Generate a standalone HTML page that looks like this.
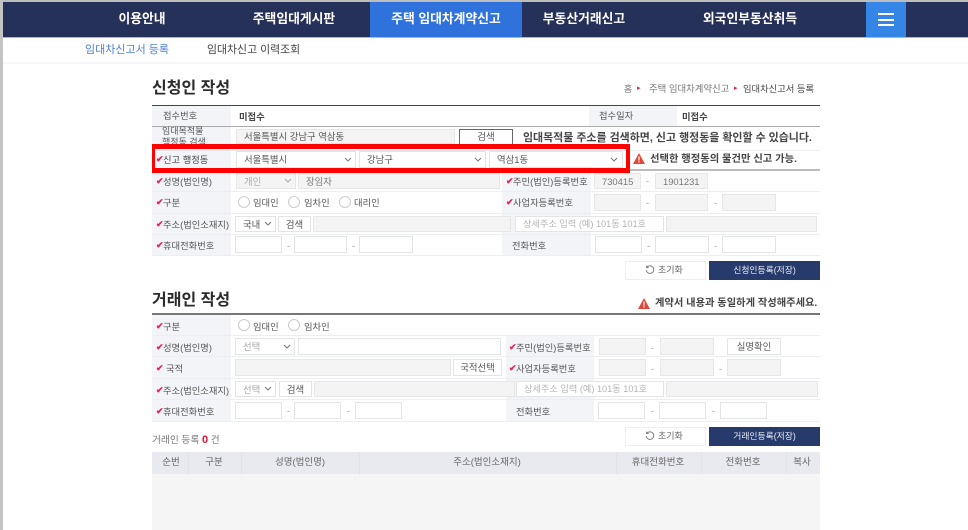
<!DOCTYPE html>
<html lang="ko"><head><meta charset="utf-8"><title>임대차신고서 등록</title>
<style>
html,body{margin:0;padding:0;width:968px;height:530px;overflow:hidden;background:#fff}
body{position:relative;font-family:"Liberation Sans","Noto Sans CJK KR",sans-serif;font-size:10px;color:#555;filter:blur(.3px)}
div,span{position:absolute;white-space:nowrap;box-sizing:border-box}
.t{line-height:14px;height:14px}
.n{color:#fff;font-size:12.8px;font-weight:700;line-height:20px;top:9px;text-align:center}
.l{left:152px;width:79px;background:#f3f4f8}
.m{background:#f3f4f8}
.h{height:1px;background:#eceef1;left:152px;width:668px}
.i{background:#fff;border:1px solid #e3e4e6;height:17px;font-size:9.4px;line-height:15px;padding-left:7px}
.g{background:#f4f4f4;border:1px solid #e6e6e6;height:17px;font-size:9.4px;line-height:15px;color:#777;padding-left:7px}
.c{color:#ee1c55;font-size:9px;font-weight:700;line-height:14px;height:14px}
.lb{font-size:9.3px;line-height:14px;height:14px;color:#555}
.r{width:12px;height:12px;border:1px solid #ccc;border-radius:50%;background:#fff}
.d{font-size:9px;color:#999;line-height:14px;height:14px}
.ch{width:8px;height:6px}
.th{top:456px;font-size:9.5px;line-height:14px;color:#666;text-align:center}
.s{top:452px;height:22px;width:1px;background:#e1e3e9}
</style></head><body>

<!-- Frame -->
<div style="left:0;top:0;width:968px;height:2px;background:#bdbdbd"></div>
<div style="left:0;top:0;width:3px;height:530px;background:#c4c4c4"></div>

<!-- Nav -->
<div style="left:3px;top:2px;width:965px;height:35px;background:#263159"></div>
<div style="left:3px;top:37px;width:965px;height:1px;background:#b5b7bf"></div>
<div style="left:370px;top:2px;width:152px;height:35px;background:#2f72dc"></div>
<div style="left:866px;top:2px;width:40px;height:35px;background:#3585e6"></div>
<div style="left:878px;top:13px;width:16px;height:2px;background:#fff"></div>
<div style="left:878px;top:19px;width:16px;height:2px;background:#fff"></div>
<div style="left:878px;top:24px;width:16px;height:2px;background:#fff"></div>
<div class="n" style="left:102px;width:80px">이용안내</div>
<div class="n" style="left:234px;width:120px">주택임대게시판</div>
<div class="n" style="left:376px;width:140px">주택 임대차계약신고</div>
<div class="n" style="left:524px;width:120px">부동산거래신고</div>
<div class="n" style="left:688px;width:124px">외국인부동산취득</div>

<!-- Sub nav -->
<div class="t" style="left:85px;top:43px;font-size:11px;color:#4f7fd6">임대차신고서 등록</div>
<div class="t" style="left:207px;top:43px;font-size:10.9px;color:#444">임대차신고 이력조회</div>
<div style="left:3px;top:62px;width:965px;height:2px;background:#f7f7f7"></div>

<!-- Section 1 -->
<div style="left:152px;top:78px;font-size:16px;font-weight:700;color:#2b2b2b;line-height:22px">신청인 작성</div>
<div class="t" style="left:624px;top:82px;font-size:9px;color:#777">홈</div>
<div class="t" style="left:637px;top:82px;font-size:7px;color:#e8194f">▸</div>
<div class="t" style="left:649px;top:82px;font-size:9.4px;color:#777">주택 임대차계약신고</div>
<div class="t" style="left:734px;top:82px;font-size:7px;color:#e8194f">▸</div>
<div class="t" style="left:743px;top:82px;font-size:9.3px;color:#444">임대차신고서 등록</div>

<div style="left:152px;top:105px;width:668px;height:1px;background:#444"></div>
<div class="l" style="top:106px;height:149px"></div>
<div class="m" style="left:589px;top:106px;width:88px;height:20px"></div>
<div class="m" style="left:502px;top:172px;width:89px;height:83px"></div>
<div style="left:152px;top:126px;width:668px;height:1px;background:#aaa"></div>
<div class="h" style="top:150px"></div>
<div style="left:152px;top:169px;width:668px;height:2px;background:#bcbcbc"></div>
<div class="h" style="top:191px"></div>
<div class="h" style="top:213px"></div>
<div class="h" style="top:234px"></div>
<div class="h" style="top:255px"></div>

<div class="lb" style="left:163px;top:109px">접수번호</div>
<div class="lb" style="left:239px;top:110px;font-weight:700;color:#444">미접수</div>
<div class="lb" style="left:599px;top:109px">접수일자</div>
<div class="lb" style="left:682px;top:110px;font-weight:700;color:#444">미접수</div>

<div class="lb" style="left:162px;top:126px;font-size:9px;line-height:10px">임대목적물</div>
<div class="lb" style="left:162px;top:137px;font-size:9px;line-height:10px;height:7px;overflow:hidden">행정동 검색</div>
<div class="g" style="left:236px;top:129px;width:219px;height:15px;line-height:14px;color:#555">서울특별시 강남구 역삼동</div>
<div style="left:459px;top:129px;width:54px;height:16px;background:#fff;border:1px solid #666;border-bottom:0;font-size:9.5px;line-height:15px;text-align:center;color:#555">검색</div>
<div class="t" style="left:523px;top:131px;font-size:10.95px;font-weight:700;color:#444">임대목적물 주소를 검색하면, 신고 행정동을 확인할 수 있습니다.</div>

<!-- Red row -->
<div class="c" style="left:156px;top:152px">✔</div>
<div class="lb" style="left:163px;top:153px;color:#444">신고 행정동</div>
<div class="i" style="left:236px;top:151px;width:120px;height:17px;color:#555">서울특별시</div>
<div class="i" style="left:359px;top:151px;width:127px;height:17px;color:#555">강남구</div>
<div class="i" style="left:489px;top:151px;width:134px;height:17px;color:#555">역삼1동</div>
<svg class="ch" style="position:absolute;left:344px;top:157px" viewBox="0 0 8 6"><path d="M1 1l3 3 3-3" fill="none" stroke="#777"/></svg>
<svg class="ch" style="position:absolute;left:474px;top:157px" viewBox="0 0 8 6"><path d="M1 1l3 3 3-3" fill="none" stroke="#777"/></svg>
<svg class="ch" style="position:absolute;left:610px;top:157px" viewBox="0 0 8 6"><path d="M1 1l3 3 3-3" fill="none" stroke="#777"/></svg>
<div style="left:152px;top:144px;width:478px;height:29px;border:solid #f00;border-width:5px 4px 5px 3px"></div>
<svg style="position:absolute;left:633px;top:153px" width="12" height="11" viewBox="0 0 12 11"><path d="M6 0L12 11H0Z" fill="#e0483a"/><rect x="5.4" y="3.5" width="1.2" height="4" fill="#fff"/><rect x="5.4" y="8.2" width="1.2" height="1.3" fill="#fff"/></svg>
<div class="t" style="left:650px;top:153px;font-size:10.3px;font-weight:700;color:#444">선택한 행정동의 물건만 신고 가능.</div>

<!-- 성명 -->
<div class="c" style="left:156px;top:174px">✔</div>
<div class="lb" style="left:163px;top:175px">성명(법인명)</div>
<div class="g" style="left:236px;top:173px;width:60px;height:16px;color:#aaa">개인</div>
<svg class="ch" style="position:absolute;left:284px;top:178px" viewBox="0 0 8 6"><path d="M1 1l3 3 3-3" fill="none" stroke="#aaa"/></svg>
<div class="g" style="left:298px;top:173px;width:202px;height:16px">장임자</div>
<div class="c" style="left:506px;top:174px">✔</div>
<div class="lb" style="left:513px;top:175px">주민(법인)등록번호</div>
<div class="g" style="left:594px;top:173px;width:47px;height:16px">730415</div>
<div class="d" style="left:646px;top:174px">-</div>
<div class="g" style="left:655px;top:173px;width:53px;height:16px">1901231</div>

<!-- 구분 -->
<div class="c" style="left:156px;top:195px">✔</div>
<div class="lb" style="left:163px;top:196px">구분</div>
<div class="r" style="left:238px;top:196px"></div><div class="lb" style="left:253px;top:196px">임대인</div>
<div class="r" style="left:288px;top:196px"></div><div class="lb" style="left:304px;top:196px">임차인</div>
<div class="r" style="left:339px;top:196px"></div><div class="lb" style="left:354px;top:196px">대리인</div>
<div class="c" style="left:506px;top:195px">✔</div>
<div class="lb" style="left:513px;top:196px">사업자등록번호</div>
<div class="g" style="left:594px;top:194px;width:47px;height:17px"></div>
<div class="d" style="left:646px;top:196px">-</div>
<div class="g" style="left:655px;top:194px;width:53px;height:17px"></div>
<div class="d" style="left:714px;top:196px">-</div>
<div class="g" style="left:722px;top:194px;width:54px;height:17px"></div>

<!-- 주소 -->
<div class="c" style="left:156px;top:217px">✔</div>
<div class="lb" style="left:163px;top:218px">주소(법인소재지)</div>
<div class="i" style="left:235px;top:216px;width:41px;height:16px">국내</div>
<svg class="ch" style="position:absolute;left:264px;top:221px" viewBox="0 0 8 6"><path d="M1 1l3 3 3-3" fill="none" stroke="#777"/></svg>
<div class="i" style="left:278px;top:216px;width:33px;height:16px;padding:0;text-align:center">검색</div>
<div class="g" style="left:313px;top:216px;width:198px;height:16px"></div>
<div class="i" style="left:515px;top:216px;width:149px;height:16px;font-size:9.2px;color:#b5b5b5">상세주소 입력 (예) 101동 101호</div>
<div class="g" style="left:666px;top:216px;width:151px;height:16px"></div>

<!-- 휴대 -->
<div class="c" style="left:156px;top:238px">✔</div>
<div class="lb" style="left:163px;top:239px">휴대전화번호</div>
<div class="i" style="left:235px;top:236px;width:47px;height:17px"></div>
<div class="d" style="left:287px;top:239px">-</div>
<div class="i" style="left:294px;top:236px;width:53px;height:17px"></div>
<div class="d" style="left:352px;top:239px">-</div>
<div class="i" style="left:359px;top:236px;width:54px;height:17px"></div>
<div class="lb" style="left:512px;top:239px">전화번호</div>
<div class="i" style="left:595px;top:236px;width:47px;height:17px"></div>
<div class="d" style="left:647px;top:239px">-</div>
<div class="i" style="left:655px;top:236px;width:54px;height:17px"></div>
<div class="d" style="left:714px;top:239px">-</div>
<div class="i" style="left:722px;top:236px;width:54px;height:17px"></div>

<!-- buttons -->
<div style="left:625px;top:261px;width:81px;height:19px;background:#fff;border:1px solid #eee;font-size:9px;line-height:17px;color:#666;padding-left:32px">초기화</div>
<svg style="position:absolute;left:645px;top:265px" width="10" height="10" viewBox="0 0 10 10"><path d="M2 2.2A3.8 3.8 0 1 1 1.2 5M1.6 0.6V2.6H3.6" fill="none" stroke="#777" stroke-width=".9"/></svg>
<div style="left:709px;top:261px;width:111px;height:19px;background:#263a6c;font-size:8.8px;line-height:18px;color:#e8ebf4;text-align:center">신청인등록(저장)</div>

<!-- Section 2 -->
<div style="left:152px;top:290px;font-size:16px;font-weight:700;color:#2b2b2b;line-height:22px">거래인 작성</div>
<svg style="position:absolute;left:638px;top:298px" width="12" height="11" viewBox="0 0 12 11"><path d="M6 0L12 11H0Z" fill="#e0483a"/><rect x="5.4" y="3.5" width="1.2" height="4" fill="#fff"/><rect x="5.4" y="8.2" width="1.2" height="1.3" fill="#fff"/></svg>
<div class="t" style="left:655px;top:297px;font-size:10.25px;font-weight:700;color:#444">계약서 내용과 동일하게 작성해주세요.</div>
<div style="left:152px;top:313px;width:668px;height:2px;background:#777"></div>
<div class="l" style="top:315px;height:107px"></div>
<div class="m" style="left:506px;top:336px;width:88px;height:86px"></div>
<div class="h" style="top:335px"></div>
<div class="h" style="top:356px"></div>
<div class="h" style="top:378px"></div>
<div class="h" style="top:399px"></div>
<div class="h" style="top:421px"></div>

<div class="c" style="left:156px;top:319px">✔</div>
<div class="lb" style="left:163px;top:320px">구분</div>
<div class="r" style="left:238px;top:319px"></div><div class="lb" style="left:253px;top:320px">임대인</div>
<div class="r" style="left:288px;top:319px"></div><div class="lb" style="left:304px;top:320px">임차인</div>

<div class="c" style="left:156px;top:340px">✔</div>
<div class="lb" style="left:163px;top:341px">성명(법인명)</div>
<div class="i" style="left:235px;top:338px;width:60px;height:17px;color:#aaa">선택</div>
<svg class="ch" style="position:absolute;left:283px;top:344px" viewBox="0 0 8 6"><path d="M1 1l3 3 3-3" fill="none" stroke="#777"/></svg>
<div class="i" style="left:298px;top:338px;width:203px;height:17px"></div>
<div class="c" style="left:509px;top:340px">✔</div>
<div class="lb" style="left:516px;top:341px">주민(법인)등록번호</div>
<div class="g" style="left:599px;top:338px;width:47px;height:17px"></div>
<div class="d" style="left:651px;top:341px">-</div>
<div class="g" style="left:660px;top:338px;width:54px;height:17px"></div>
<div class="i" style="left:727px;top:338px;width:54px;height:17px;padding:0;text-align:center">실명확인</div>

<div class="c" style="left:156px;top:361px">✔</div>
<div class="lb" style="left:166px;top:362px">국적</div>
<div class="g" style="left:235px;top:359px;width:216px;height:17px"></div>
<div class="i" style="left:453px;top:359px;width:49px;height:17px;padding:0;text-align:center">국적선택</div>
<div class="c" style="left:509px;top:361px">✔</div>
<div class="lb" style="left:516px;top:362px">사업자등록번호</div>
<div class="g" style="left:599px;top:359px;width:47px;height:17px"></div>
<div class="d" style="left:651px;top:362px">-</div>
<div class="g" style="left:660px;top:359px;width:54px;height:17px"></div>
<div class="d" style="left:719px;top:362px">-</div>
<div class="g" style="left:727px;top:359px;width:54px;height:17px"></div>

<div class="c" style="left:156px;top:383px">✔</div>
<div class="lb" style="left:163px;top:384px">주소(법인소재지)</div>
<div class="i" style="left:235px;top:381px;width:41px;height:16px;color:#aaa">선택</div>
<svg class="ch" style="position:absolute;left:264px;top:386px" viewBox="0 0 8 6"><path d="M1 1l3 3 3-3" fill="none" stroke="#777"/></svg>
<div class="i" style="left:279px;top:381px;width:33px;height:16px;padding:0;text-align:center">검색</div>
<div class="g" style="left:314px;top:381px;width:201px;height:16px"></div>
<div class="i" style="left:516px;top:381px;width:148px;height:16px;font-size:9.2px;color:#b5b5b5">상세주소 입력 (예) 101동 101호</div>
<div class="g" style="left:666px;top:381px;width:152px;height:16px"></div>

<div class="c" style="left:156px;top:404px">✔</div>
<div class="lb" style="left:163px;top:405px">휴대전화번호</div>
<div class="i" style="left:235px;top:402px;width:47px;height:17px"></div>
<div class="d" style="left:287px;top:404px">-</div>
<div class="i" style="left:294px;top:402px;width:47px;height:17px"></div>
<div class="d" style="left:347px;top:404px">-</div>
<div class="i" style="left:355px;top:402px;width:47px;height:17px"></div>
<div class="lb" style="left:516px;top:405px">전화번호</div>
<div class="i" style="left:598px;top:402px;width:47px;height:17px"></div>
<div class="d" style="left:651px;top:404px">-</div>
<div class="i" style="left:659px;top:402px;width:47px;height:17px"></div>
<div class="d" style="left:712px;top:404px">-</div>
<div class="i" style="left:720px;top:402px;width:47px;height:17px"></div>

<!-- bottom -->
<div class="t" style="left:152px;top:433px;font-size:9.7px;color:#777">거래인 등록 <b style="color:#e8102a;font-size:11px">0</b> 건</div>
<div style="left:625px;top:427px;width:81px;height:19px;background:#fff;border:1px solid #eee;font-size:9px;line-height:17px;color:#666;padding-left:32px">초기화</div>
<svg style="position:absolute;left:645px;top:431px" width="10" height="10" viewBox="0 0 10 10"><path d="M2 2.2A3.8 3.8 0 1 1 1.2 5M1.6 0.6V2.6H3.6" fill="none" stroke="#777" stroke-width=".9"/></svg>
<div style="left:709px;top:427px;width:111px;height:19px;background:#263a6c;font-size:8.8px;line-height:18px;color:#e8ebf4;text-align:center">거래인등록(저장)</div>

<div style="left:152px;top:452px;width:668px;height:22px;background:#e9eaf0"></div>
<div style="left:152px;top:474px;width:668px;height:56px;background:#f5f5f5"></div>
<div class="s" style="left:188px"></div>
<div class="s" style="left:241px"></div>
<div class="s" style="left:359px"></div>
<div class="s" style="left:616px"></div>
<div class="s" style="left:701px"></div>
<div class="s" style="left:786px"></div>
<div class="th" style="left:151px;width:40px">순번</div>
<div class="th" style="left:194px;width:40px">구분</div>
<div class="th" style="left:250px;width:100px">성명(법인명)</div>
<div class="th" style="left:437px;width:100px">주소(법인소재지)</div>
<div class="th" style="left:608px;width:100px">휴대전화번호</div>
<div class="th" style="left:693px;width:100px">전화번호</div>
<div class="th" style="left:782px;width:40px">복사</div>
</body></html>
